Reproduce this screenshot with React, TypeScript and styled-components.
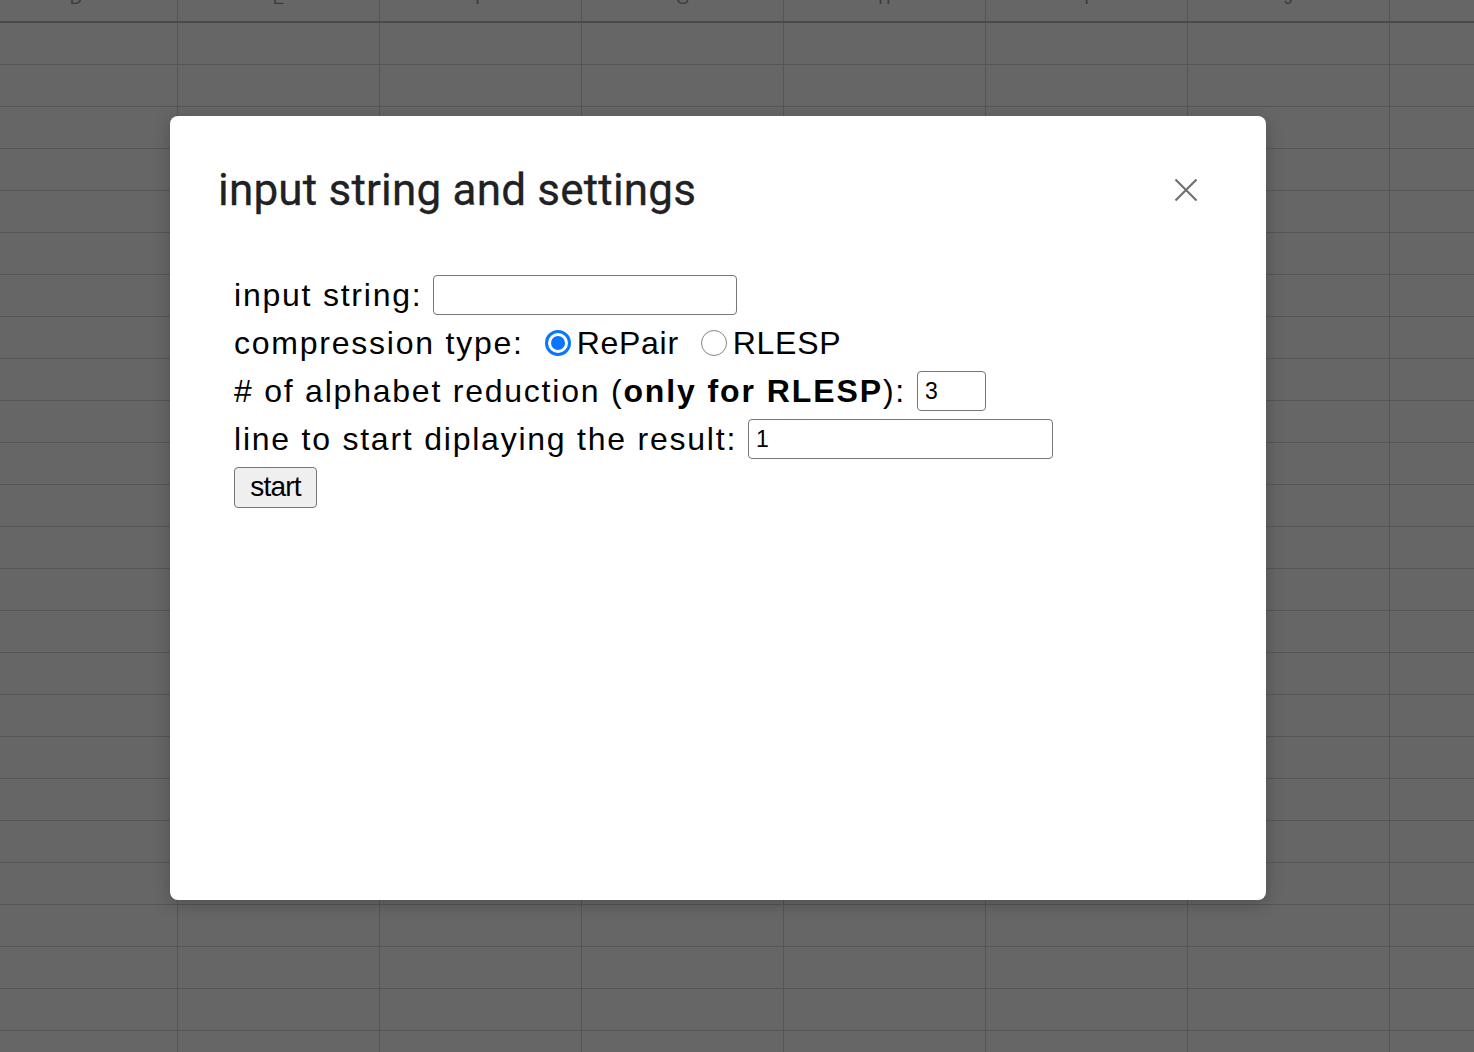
import React from 'react';
import styled, { createGlobalStyle } from 'styled-components';

const GlobalStyle = createGlobalStyle`
  html, body { margin: 0; padding: 0; }
  body { background: #666666; font-family: "Liberation Sans", Arial, sans-serif; }
  #root { position: relative; width: 100vw; height: 100vh; overflow: hidden; }
`;

const COLS = '177px repeat(6, 201px) 1fr';

const Sheet = styled.div`
  display: flex;
  flex-direction: column;
  height: 100vh;
  overflow: hidden;
  background: #666666;
`;

const HeaderRow = styled.div`
  display: grid;
  grid-template-columns: ${COLS};
  column-gap: 1px;
  height: 21px;
  background: #555555;
  border-bottom: 2px solid #4a4a4a;
  overflow: hidden;
  flex-shrink: 0;
`;

const HeaderCell = styled.div<{ $first?: boolean }>`
  background: #666666;
  display: flex;
  justify-content: center;
  align-items: flex-start;
  padding-right: ${(p) => (p.$first ? '25px' : '0')};
  overflow: hidden;
`;

const HeaderLetter = styled.span`
  font-family: "Liberation Sans", Arial, sans-serif;
  font-size: 17px;
  line-height: 17px;
  margin-top: -10px;
  color: #3b3b3b;
`;

const Grid = styled.div`
  display: grid;
  grid-template-columns: ${COLS};
  grid-auto-rows: 41px;
  gap: 1px;
  background: #555555;
`;

const Cell = styled.div`
  background: #666666;
`;

const Dialog = styled.div`
  position: absolute;
  left: 170px;
  top: 116px;
  width: 1096px;
  height: 784px;
  box-sizing: border-box;
  padding: 48px;
  background: #ffffff;
  border-radius: 8px;
  box-shadow: 0 4px 18px rgba(0, 0, 0, 0.22);
  display: flex;
  flex-direction: column;
`;

const DialogHeader = styled.div`
  display: flex;
  justify-content: space-between;
  align-items: center;
`;

const Title = styled.h2`
  margin: 0;
  font-family: Roboto, "Open Sans", sans-serif;
  font-weight: 400;
  font-size: 44px;
  letter-spacing: 0.2px;
  line-height: 52px;
  color: #202124;
  -webkit-text-stroke: 0.3px #202124;
`;

const CloseButton = styled.button`
  width: 48px;
  height: 48px;
  margin-right: 8px;
  padding: 0;
  border: none;
  background: transparent;
  display: flex;
  align-items: center;
  justify-content: center;
  cursor: pointer;
`;

const Form = styled.div`
  margin-top: 57px;
  padding-left: 16px;
  display: flex;
  flex-direction: column;
  gap: 4px;
`;

const Row = styled.div`
  height: 44px;
  display: flex;
  align-items: center;
  gap: 11px;
`;

const Label = styled.span<{ $tight?: boolean }>`
  font-family: "Liberation Sans", Arial, sans-serif;
  font-size: 32px;
  letter-spacing: ${(p) => (p.$tight ? '0.7px' : '1.77px')};
  color: #000000;
  white-space: pre;
`;

const Strong = styled.b`
  font-weight: 700;
  letter-spacing: 1.9px;
`;

const TextInput = styled.input<{ $w: number }>`
  box-sizing: border-box;
  width: ${(p) => p.$w}px;
  height: 40px;
  border: 1px solid #767676;
  border-radius: 4px;
  padding: 0 7px;
  font-family: "Liberation Sans", Arial, sans-serif;
  font-size: 23px;
  color: #000;
  background: #fff;
  outline: none;
`;

const RadioGroup = styled.div`
  display: flex;
  align-items: center;
  gap: 22px;
  margin-left: 10px;
`;

const RadioOption = styled.label`
  display: flex;
  align-items: center;
  gap: 6px;
  cursor: pointer;
`;

const RadioCircle = styled.span<{ $checked?: boolean }>`
  box-sizing: border-box;
  width: 26px;
  height: 26px;
  border-radius: 50%;
  border: ${(p) => (p.$checked ? '3px solid #0a75ff' : '1.5px solid #858585')};
  background: #fff;
  display: flex;
  align-items: center;
  justify-content: center;
  &::after {
    content: '';
    display: ${(p) => (p.$checked ? 'block' : 'none')};
    width: 14px;
    height: 14px;
    border-radius: 50%;
    background: #0a75ff;
  }
`;

const StartButton = styled.button`
  box-sizing: border-box;
  width: 83px;
  height: 41px;
  border: 1px solid #767676;
  border-radius: 4px;
  background: #efefef;
  font-family: "Liberation Sans", Arial, sans-serif;
  font-size: 28px;
  letter-spacing: -0.8px;
  color: #000;
  padding: 0;
  cursor: pointer;
`;

const letters = ['D', 'E', 'F', 'G', 'H', 'I', 'J', ''];

export default function App() {
  const rows = Array.from({ length: 26 });
  return (
    <>
      <GlobalStyle />
      <Sheet>
        <HeaderRow>
          {letters.map((l, i) => (
            <HeaderCell key={i} $first={i === 0}>
              <HeaderLetter>{l}</HeaderLetter>
            </HeaderCell>
          ))}
        </HeaderRow>
        <Grid>
          {rows.map((_, r) => letters.map((_, c) => <Cell key={`${r}-${c}`} />))}
        </Grid>
      </Sheet>
      <Dialog>
        <DialogHeader>
          <Title>input string and settings</Title>
          <CloseButton aria-label="close">
            <svg width="24" height="24" viewBox="0 0 24 24">
              <path d="M1.5 1.5 L22.5 22.5 M22.5 1.5 L1.5 22.5" stroke="#707070" strokeWidth="2.2" fill="none" />
            </svg>
          </CloseButton>
        </DialogHeader>
        <Form>
          <Row>
            <Label>input string:</Label>
            <TextInput $w={304} defaultValue="" />
          </Row>
          <Row>
            <Label>compression type:</Label>
            <RadioGroup>
              <RadioOption>
                <RadioCircle $checked />
                <Label $tight>RePair</Label>
              </RadioOption>
              <RadioOption>
                <RadioCircle />
                <Label $tight>RLESP</Label>
              </RadioOption>
            </RadioGroup>
          </Row>
          <Row>
            <Label>
              # of alphabet reduction (<Strong>only for RLESP</Strong>):
            </Label>
            <TextInput $w={69} defaultValue="3" />
          </Row>
          <Row>
            <Label>line to start diplaying the result:</Label>
            <TextInput $w={305} defaultValue="1" />
          </Row>
          <Row>
            <StartButton>start</StartButton>
          </Row>
        </Form>
      </Dialog>
    </>
  );
}
